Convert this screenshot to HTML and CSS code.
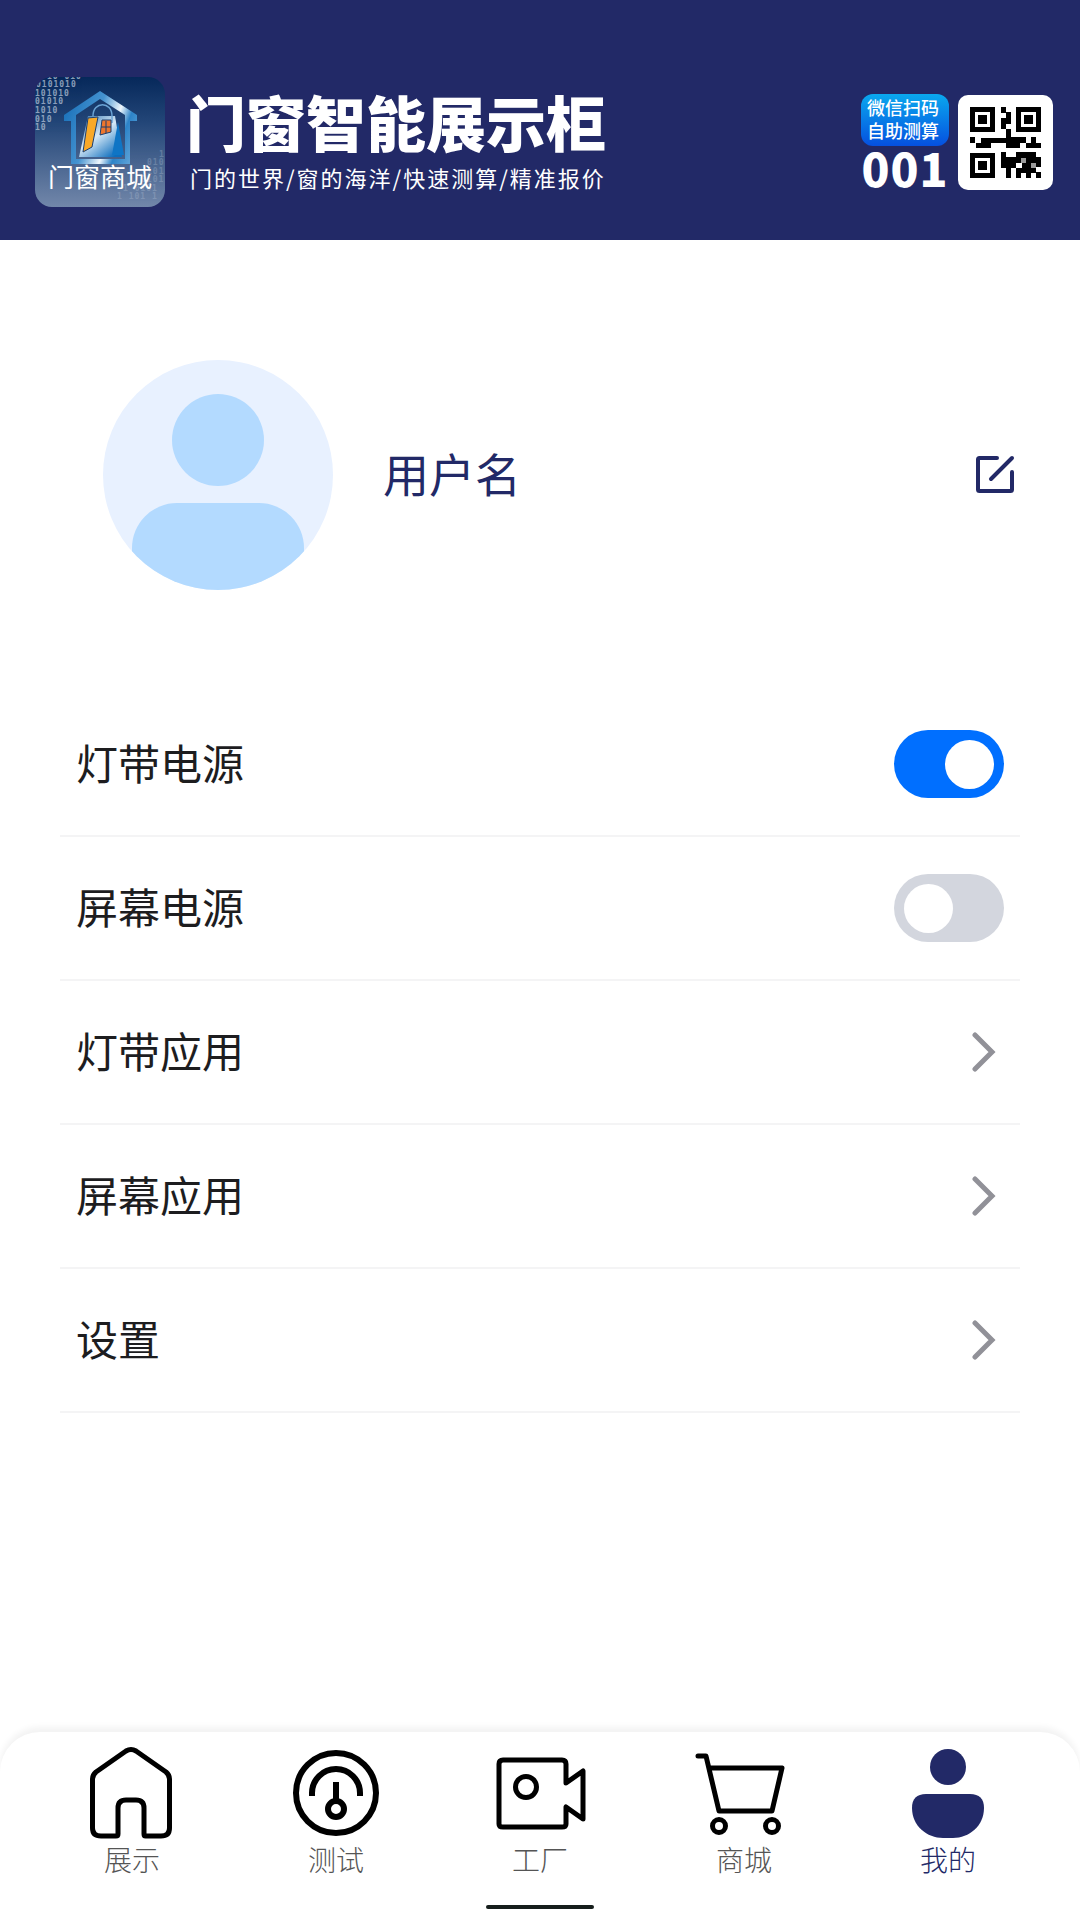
FILE: index.html
```html
<!DOCTYPE html>
<html lang="zh-CN">
<head>
    <meta charset="UTF-8">
    <meta name="viewport" content="width=device-width, initial-scale=1.0">
    <title>门窗智能展示柜 - 我的</title>
    <link rel="stylesheet" href="styles.css">
</head>
<body>
    <header class="header">
        <svg class="logo" viewBox="0 0 130 130" role="img" aria-label="门窗商城">
            <defs>
                <linearGradient id="logoBg" x1="0" y1="0" x2="0" y2="1">
                    <stop offset="0" stop-color="#06285a"/>
                    <stop offset="0.35" stop-color="#234678"/>
                    <stop offset="1" stop-color="#7287aa"/>
                </linearGradient>
                <linearGradient id="houseBg" x1="0" y1="0.3" x2="1" y2="0.7">
                    <stop offset="0" stop-color="#1c73bb"/>
                    <stop offset="0.4" stop-color="#4593d0"/>
                    <stop offset="0.65" stop-color="#eef6fc"/>
                    <stop offset="0.8" stop-color="#2c83c8"/>
                    <stop offset="1" stop-color="#5ba1d6"/>
                </linearGradient>
                <linearGradient id="bagBg" x1="0" y1="0" x2="0.8" y2="1">
                    <stop offset="0" stop-color="#2c6fae"/>
                    <stop offset="0.5" stop-color="#d5e8f6"/>
                    <stop offset="1" stop-color="#0c6dbd"/>
                </linearGradient>
                <clipPath id="logoClip"><rect width="130" height="130" rx="17"/></clipPath>
            </defs>
            <g clip-path="url(#logoClip)">
                <rect width="130" height="130" fill="url(#logoBg)"/>
                <g class="logo-code">
                    <text x="12" y="2">10 010</text>
                    <text x="1" y="10">0101010</text>
                    <text x="0" y="19">101010</text>
                    <text x="0" y="27">01010</text>
                    <text x="0" y="36">1010</text>
                    <text x="0" y="45">010</text>
                    <text x="0" y="53">10</text>
                </g>
                <g class="logo-code logo-code-dim">
                    <text x="124" y="80">1</text>
                    <text x="112" y="88">010</text>
                    <text x="112" y="97">101</text>
                    <text x="106" y="105">0101</text>
                    <text x="88" y="114">1 0101</text>
                    <text x="82" y="122">1 101 1</text>
                </g>
                <path d="M29 38L65 14L102 38V44H95V87H36V44H29ZM41 38V82H90V38L65 22Z" fill="url(#houseBg)" fill-rule="evenodd"/>
                <path d="M53 39H80L87 80H44Z" fill="url(#bagBg)"/>
                <path d="M83 45L89 78H77Z" fill="#0f75c5"/>
                <path d="M58 39C58 24 77 24 77 39V46" fill="none" stroke="#6ba4d5" stroke-width="1.5"/>
                <path d="M53 41L63 40L57 70L48 75Z" fill="#f9a928" stroke="#1d3f6e"/>
                <path d="M67 43H76V55L65 58Z" fill="#ee762d" stroke="#1d3f6e"/>
                <path d="M71 44V56M66 50H76" stroke="#1d3f6e"/>
                <text class="logo-name" x="65" y="110">门窗商城</text>
            </g>
        </svg>
        <div class="brand">
            <h1>门窗智能展示柜</h1>
            <p>门的世界/窗的海洋/快速测算/精准报价</p>
        </div>
        <div class="scan">
            <div class="scan-tip">微信扫码<br>自助测算</div>
            <div class="scan-no">001</div>
        </div>
        <div class="qrcode">
            <svg viewBox="0 0 71 71" role="img" aria-label="微信二维码">
                <path d="M0 0H25V25H0ZM5 5V20H20V5ZM46 0H71V25H46ZM51 5V20H66V5ZM0 46H25V71H0ZM5 51V66H20V51Z" fill-rule="evenodd"/>
                <path d="M8 8H17V17H8ZM54 8H63V17H54ZM8 54H17V63H8Z"/>
                <path d="M31 0H36V5H41V17H36V22H31V11H36V6H31ZM36 22H41V30H56V36H50V41H36V36H21V41H6V36H11V31H36ZM0 30H5V36H0ZM61 30H66V36H71V41H56V36H61ZM31 45H36V50H46V45H66V50H71V60H66V65H71V71H66V66H61V71H56V66H51V71H46V66H41V71H36V66H46V61H52V56H46V61H41V66H36V61H31V50H31Z"/>
                <path d="M51 51H56V56H51ZM61 56H66V61H61Z" fill="#999"/>
            </svg>
        </div>
    </header>

    <main class="main">
        <section class="profile">
            <svg class="avatar" viewBox="0 0 230 230" aria-hidden="true">
                <clipPath id="avatarClip"><circle cx="115" cy="115" r="115"/></clipPath>
                <g clip-path="url(#avatarClip)">
                    <rect width="230" height="230" fill="#e8f1ff"/>
                    <circle cx="115" cy="80" r="46" fill="#b3daff"/>
                    <rect x="29" y="143" width="172" height="120" rx="45" fill="#b3daff"/>
                </g>
            </svg>
            <h2>用户名</h2>
            <button class="edit" type="button" aria-label="编辑">
                <svg viewBox="0 0 40 40">
                    <path d="M21 3H3.500Q2 3 2 4.500V34.500Q2 36 3.500 36H34.500Q36 36 36 34.500V17M15 24L36 3"/>
                </svg>
            </button>
        </section>

        <ul class="list">
            <li>
                <label class="row"><span>灯带电源</span><input class="switch" type="checkbox" role="switch" checked></label>
            </li>
            <li>
                <label class="row"><span>屏幕电源</span><input class="switch" type="checkbox" role="switch"></label>
            </li>
            <li>
                <a class="row" href="#light"><span>灯带应用</span><svg class="arrow" viewBox="0 0 24 40"><path d="M3 3L20 20L3 37"/></svg></a>
            </li>
            <li>
                <a class="row" href="#screen"><span>屏幕应用</span><svg class="arrow" viewBox="0 0 24 40"><path d="M3 3L20 20L3 37"/></svg></a>
            </li>
            <li>
                <a class="row" href="#settings"><span>设置</span><svg class="arrow" viewBox="0 0 24 40"><path d="M3 3L20 20L3 37"/></svg></a>
            </li>
        </ul>
    </main>

    <footer class="tabbar">
        <nav class="tabs">
            <a class="tab" href="#show">
                <svg viewBox="0 0 92 92">
                    <path d="M40 4Q45 1 50 4L80 25Q83.500 28 83.500 32V81Q83.500 89 75 89H59.500Q58 89 58 87V61Q58 53 50 53H40Q32 53 32 61V87Q32 89 30 89H15Q6.500 89 6.500 81V32Q6.500 28 10 25Z"/>
                </svg>
                <span>展示</span>
            </a>
            <a class="tab" href="#test">
                <svg class="thick" viewBox="0 0 92 92">
                    <circle cx="46" cy="46" r="40"/>
                    <path d="M22 49V46A24 24 0 0 1 70 46V49M46 35V54"/>
                    <circle cx="46" cy="62" r="8"/>
                </svg>
                <span>测试</span>
            </a>
            <a class="tab" href="#factory">
                <svg viewBox="0 0 92 92">
                    <path d="M9 13H68Q72 13 72 17V36L89 24V72L72 60V77Q72 80 68 80H9Q5 80 5 77V17Q5 13 9 13Z"/>
                    <circle cx="32" cy="40" r="10.500"/>
                </svg>
                <span>工厂</span>
            </a>
            <a class="tab" href="#mall">
                <svg viewBox="0 0 92 92">
                    <path d="M0 9H8L21 64H74L84 21H11"/>
                    <circle cx="21" cy="79" r="6.500"/>
                    <circle cx="74" cy="79" r="6.500"/>
                </svg>
                <span>商城</span>
            </a>
            <a class="tab active" href="#mine" aria-current="page">
                <svg viewBox="0 0 92 92">
                    <circle cx="46" cy="20" r="18"/>
                    <path d="M24 47H68Q82 47 82 61C82 79 67 91 51 91H41C25 91 10 79 10 61Q10 47 24 47Z"/>
                </svg>
                <span>我的</span>
            </a>
        </nav>
        <div class="home-bar"></div>
    </footer>
</body>
</html>
```

FILE: styles.css
```css
*{box-sizing:border-box;margin:0;padding:0;-webkit-tap-highlight-color:transparent}
body{font-family:"Noto Sans CJK SC",sans-serif;background:#fff;color:#1d1d1f;min-height:100vh;display:flex;flex-direction:column}
a{color:inherit;text-decoration:none}

/* 顶部 */
.header{display:flex;align-items:center;background:#222967;color:#fff;padding:77px 27px 33px 35px}
.logo{width:130px;height:130px;flex:none}
.logo-code{font:bold 8px "DejaVu Sans Mono",monospace;letter-spacing:1px;fill:#b4c2d6;opacity:.75}
.logo-code-dim{opacity:.3}
.logo-name{font-size:26px;fill:#fff;text-anchor:middle}
.brand{flex:1;padding-left:21px}
.brand h1{font-size:60px;font-weight:900;line-height:60px}
.brand p{font-size:22px;line-height:32px;letter-spacing:2px;padding:10px 0 0 4px}
.scan{width:88px;text-align:center;margin-right:9px}
.scan-tip{padding:2px 4px 4px 0;border-radius:12px;background:linear-gradient(#0aa8ee,#0550e0);font-size:18px;font-weight:500;line-height:23px}
.scan-no{font-size:46px;font-weight:900;line-height:42px;padding-bottom:2px;letter-spacing:1px}
.qrcode{background:#fff;border-radius:10px;padding:12px}
.qrcode svg{display:block;width:71px;height:71px}

/* 用户信息 */
.main{flex:1}
.profile{display:flex;align-items:center;padding:120px 64px 103px 103px}
.avatar{width:230px;height:230px}
.profile h2{flex:1;padding:0 0 6px 50px;font-size:46px;font-weight:400;color:#222967}
.edit{border:none;background:none;cursor:pointer}
.edit svg{display:block;width:40px;height:40px;fill:none;stroke:#222967;stroke-width:4;stroke-linecap:round;stroke-linejoin:round}

/* 列表 */
.list{list-style:none;padding:0 60px}
.list li{border-bottom:2px solid #f4f4f5}
.row{display:flex;justify-content:space-between;align-items:center;height:142px;padding:0 16px;font-size:42px;cursor:pointer}
.row span{padding-bottom:5px}
.switch{appearance:none;display:flex;align-items:center;width:110px;height:68px;padding:0 10px;border-radius:34px;background:#d3d6de;cursor:pointer}
.switch::before{content:"";width:49px;height:49px;border-radius:50%;background:#fff}
.switch:checked{background:#006fff;justify-content:flex-end}
.arrow{width:24px;height:40px;margin-right:8px;fill:none;stroke:#919198;stroke-width:5;stroke-linecap:round}

/* 底部导航 */
.tabbar{background:#fff;border-radius:40px 40px 0 0;box-shadow:0 -5px 6px rgba(0,0,0,.05);padding:15px 30px 11px}
.tabs{display:flex}
.tab{flex:1;display:flex;flex-direction:column;align-items:center;font-size:28px;font-weight:300;line-height:40px;color:#555}
.tab svg{width:92px;height:92px;fill:none;stroke:#000;stroke-width:5;stroke-linecap:round;stroke-linejoin:round;overflow:visible}
.tab .thick{stroke-width:6;stroke-linecap:butt}
.tab.active{color:#222967}
.tab.active svg{fill:#222967;stroke:none}
.home-bar{width:108px;height:4px;margin:26px auto 0;border-radius:2px;background:#161e1c}
```
